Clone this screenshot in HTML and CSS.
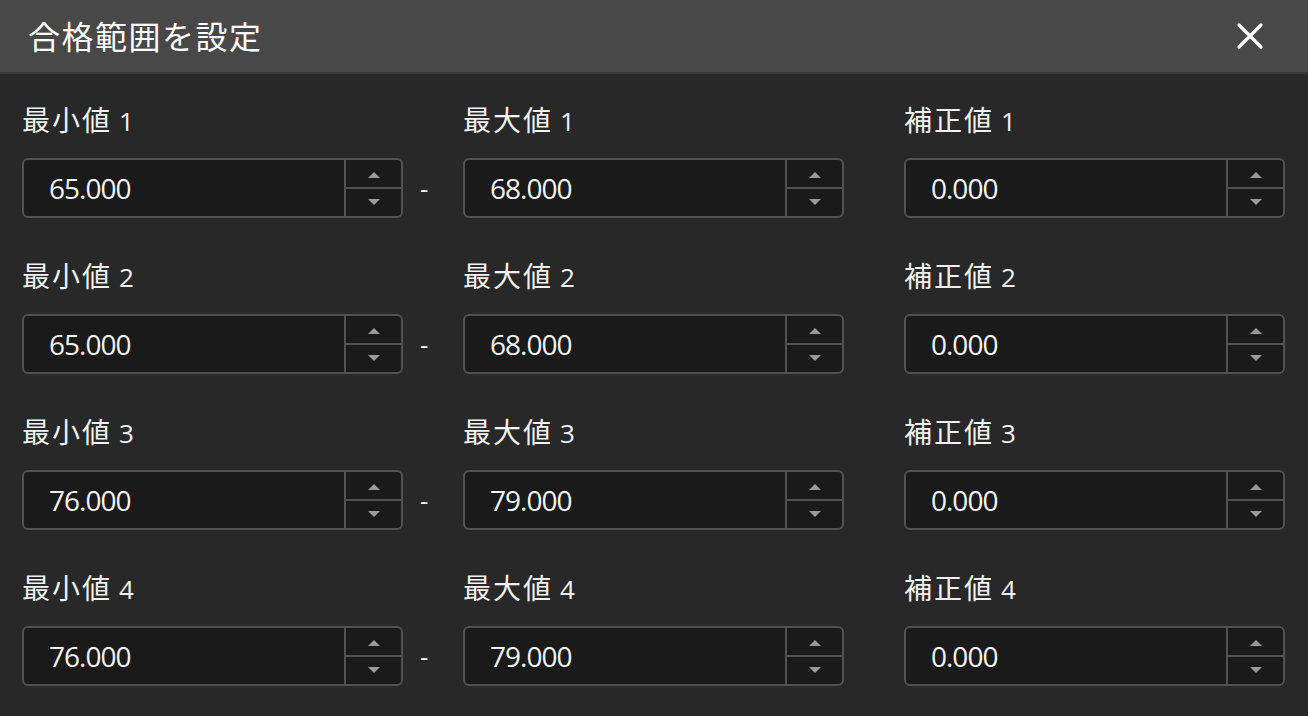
FILE: index.html
```html
<!DOCTYPE html>
<html lang="ja">
<head>
<meta charset="utf-8">
<link rel="stylesheet" href="styles.css">
</head>
<body>
<div class="dialog">
  <header class="titlebar">
    <h1 class="title">合格範囲を設定</h1>
    <button class="close" aria-label="閉じる">
      <svg width="28" height="28" viewBox="0 0 28 28"><path d="M3 3 L25 25 M25 3 L3 25" stroke="#ffffff" stroke-width="3.2" stroke-linecap="round"/></svg>
    </button>
  </header>
  <main class="grid">
    <div class="field"><div class="label">最小値<span class="num">1</span></div><div class="box"><div class="value">65.000</div><div class="spin"><div class="half"><span class="up"></span></div><div class="half"><span class="down"></span></div></div></div></div>
    <div class="sep">-</div>
    <div class="field"><div class="label">最大値<span class="num">1</span></div><div class="box"><div class="value">68.000</div><div class="spin"><div class="half"><span class="up"></span></div><div class="half"><span class="down"></span></div></div></div></div>
    <div class="gap"></div>
    <div class="field"><div class="label">補正値<span class="num">1</span></div><div class="box"><div class="value">0.000</div><div class="spin"><div class="half"><span class="up"></span></div><div class="half"><span class="down"></span></div></div></div></div>

    <div class="field"><div class="label">最小値<span class="num">2</span></div><div class="box"><div class="value">65.000</div><div class="spin"><div class="half"><span class="up"></span></div><div class="half"><span class="down"></span></div></div></div></div>
    <div class="sep">-</div>
    <div class="field"><div class="label">最大値<span class="num">2</span></div><div class="box"><div class="value">68.000</div><div class="spin"><div class="half"><span class="up"></span></div><div class="half"><span class="down"></span></div></div></div></div>
    <div class="gap"></div>
    <div class="field"><div class="label">補正値<span class="num">2</span></div><div class="box"><div class="value">0.000</div><div class="spin"><div class="half"><span class="up"></span></div><div class="half"><span class="down"></span></div></div></div></div>

    <div class="field"><div class="label">最小値<span class="num">3</span></div><div class="box"><div class="value">76.000</div><div class="spin"><div class="half"><span class="up"></span></div><div class="half"><span class="down"></span></div></div></div></div>
    <div class="sep">-</div>
    <div class="field"><div class="label">最大値<span class="num">3</span></div><div class="box"><div class="value">79.000</div><div class="spin"><div class="half"><span class="up"></span></div><div class="half"><span class="down"></span></div></div></div></div>
    <div class="gap"></div>
    <div class="field"><div class="label">補正値<span class="num">3</span></div><div class="box"><div class="value">0.000</div><div class="spin"><div class="half"><span class="up"></span></div><div class="half"><span class="down"></span></div></div></div></div>

    <div class="field"><div class="label">最小値<span class="num">4</span></div><div class="box"><div class="value">76.000</div><div class="spin"><div class="half"><span class="up"></span></div><div class="half"><span class="down"></span></div></div></div></div>
    <div class="sep">-</div>
    <div class="field"><div class="label">最大値<span class="num">4</span></div><div class="box"><div class="value">79.000</div><div class="spin"><div class="half"><span class="up"></span></div><div class="half"><span class="down"></span></div></div></div></div>
    <div class="gap"></div>
    <div class="field"><div class="label">補正値<span class="num">4</span></div><div class="box"><div class="value">0.000</div><div class="spin"><div class="half"><span class="up"></span></div><div class="half"><span class="down"></span></div></div></div></div>
  </main>
</div>
</body>
</html>
```
FILE: styles.css
```css
html, body {
  margin: 0;
  padding: 0;
  background: #282828;
  width: 1308px;
  height: 716px;
  overflow: hidden;
}
.dialog {
  font-family: "Noto Sans CJK JP", "Noto Sans", sans-serif;
  color: #f2f2f2;
}
.titlebar {
  height: 72px;
  background: #484848;
  border-bottom: 2px solid #3a3a3a;
  display: flex;
  align-items: center;
  justify-content: space-between;
  padding: 0 44px 0 28px;
}
.title {
  margin: 0;
  font-size: 32px;
  font-weight: 400;
  letter-spacing: 1.5px;
  line-height: 40px;
  color: #ffffff;
  padding-bottom: 2px;
}
.close {
  background: none;
  border: 0;
  padding: 0;
  width: 28px;
  height: 28px;
  display: flex;
}
.grid {
  display: grid;
  grid-template-columns: 381px 60px 381px 60px 381px;
  row-gap: 44px;
  padding: 32px 0 0 22px;
}
.label {
  font-size: 28px;
  letter-spacing: 2px;
  line-height: 26px;
  height: 26px;
  margin-bottom: 26px;
  color: #f2f2f2;
  white-space: nowrap;
}
.num {
  font-family: "Open Sans", "Noto Sans", sans-serif;
  font-size: 26px;
  font-weight: 500;
  letter-spacing: 0;
  margin-left: 7px;
}
.box {
  height: 60px;
  box-sizing: border-box;
  border: 2px solid #525252;
  border-radius: 6px;
  background: #1a1a1a;
  display: flex;
}
.value {
  flex: 1;
  display: flex;
  align-items: center;
  padding-left: 25px;
  font-family: "Open Sans", "Noto Sans", sans-serif;
  font-size: 28px;
  letter-spacing: -1px;
  color: #f4f4f4;
}
.spin {
  width: 55px;
  border-left: 2px solid #525252;
  display: flex;
  flex-direction: column;
}
.half {
  flex: 1;
  display: flex;
  align-items: center;
  justify-content: center;
}
.half + .half {
  border-top: 2px solid #525252;
}
.up, .down {
  width: 0;
  height: 0;
  border-left: 6px solid transparent;
  border-right: 6px solid transparent;
}
.up {
  border-bottom: 6px solid #9a9a9a;
  margin-top: 2px;
}
.down {
  border-top: 6px solid #9a9a9a;
  margin-bottom: 2px;
}
.sep {
  padding-top: 52px;
  height: 60px;
  display: flex;
  align-items: center;
  justify-content: flex-start;
  padding-left: 17px;
  font-family: "Open Sans", "Noto Sans", sans-serif;
  font-size: 26px;
  color: #f2f2f2;
}
```
